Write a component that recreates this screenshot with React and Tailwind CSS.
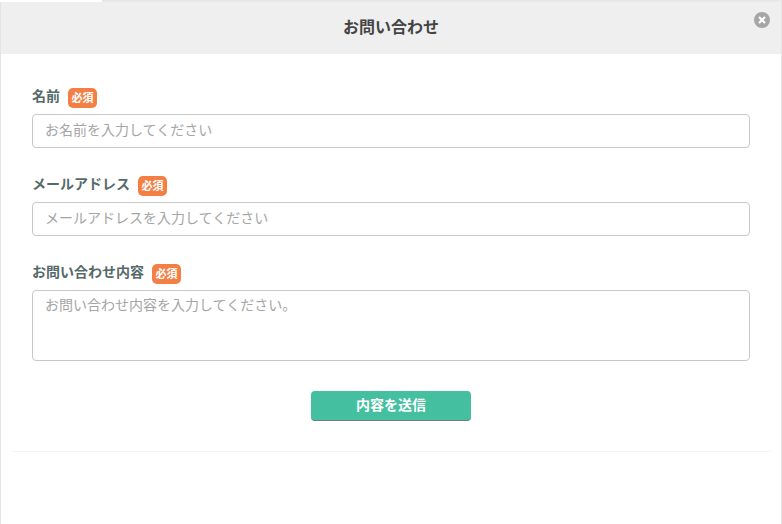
import React from 'react';

const inputClass = 'w-full h-[34px] px-3 pb-1 border border-[#c8c8c8] rounded-[4px] text-[14px] outline-none placeholder:text-[#a5a5a5]';

const Field = ({ label, children }) => (
  <div>
    <div className="flex items-center h-5 mb-1.5">
      <label className="text-[14px] leading-5 pb-1.5 font-bold text-[#566a6a]">{label}</label>
      <span className="ml-2 w-[29px] h-5 rounded-[5px] bg-[#f47f45] text-white text-[11px] leading-[19px] font-bold text-center">必須</span>
    </div>
    {children}
  </div>
);

const App = () => {
  return (
    <div className="w-[782px] h-[524px] overflow-hidden bg-white flex flex-col font-['Noto_Sans_CJK_JP','Noto_Sans',sans-serif]">
      {/* strip of the page behind the modal */}
      <div className="flex h-0.5 shrink-0">
        <div className="w-[102px] bg-white"></div>
        <div className="flex-1 bg-[#e8e8e8]"></div>
      </div>

      <div className="flex-1 border-x border-[#e4e4e4] flex flex-col min-h-0">
        <div className="relative h-[52px] shrink-0 bg-[#efefef] flex items-center justify-center">
          <h1 className="text-[16px] pb-1 font-bold text-[#444]">お問い合わせ</h1>
          <button className="absolute top-[10px] right-[11px] w-4 h-4 rounded-full bg-[#a6a6a6] flex items-center justify-center">
            <svg width="10" height="10" viewBox="0 0 10 10">
              <path d="M2 2l6 6M8 2l-6 6" stroke="#fff" strokeWidth="2.2" />
            </svg>
          </button>
        </div>

        <div className="px-[31px] pt-[34px]">
          <Field label="名前">
            <input placeholder="お名前を入力してください" className={inputClass} />
          </Field>
          <div className="mt-7">
            <Field label="メールアドレス">
              <input placeholder="メールアドレスを入力してください" className={inputClass} />
            </Field>
          </div>
          <div className="mt-7">
            <Field label="お問い合わせ内容">
              <textarea
                placeholder="お問い合わせ内容を入力してください。"
                className="block w-full h-[71px] px-3 py-[3px] border border-[#c8c8c8] rounded-[4px] text-[14px] outline-none resize-none placeholder:text-[#a5a5a5]"
              />
            </Field>
          </div>
          <div className="flex justify-center mt-[30px]">
            <button className="w-40 h-[30px] pb-[3px] rounded-[4px] bg-[#44bf9f] border-b border-[#6b7f7a] text-white text-[14px] font-bold">
              内容を送信
            </button>
          </div>
        </div>

        <div className="mt-[30px] mx-[10px] border-t border-[#f4f4f4]"></div>
      </div>
    </div>
  );
};

export default App;
